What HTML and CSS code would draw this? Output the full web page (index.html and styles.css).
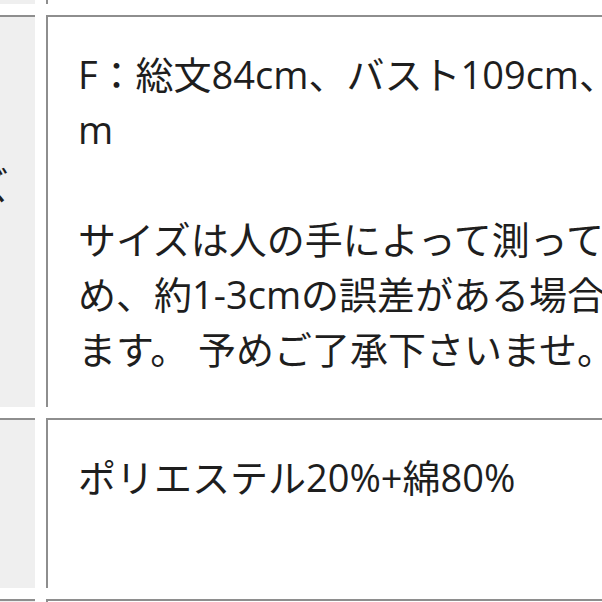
FILE: index.html
```html
<!DOCTYPE html>
<html lang="ja">
<head>
<meta charset="utf-8">
<link rel="stylesheet" href="styles.css">
</head>
<body>
<div class="spec">
  <div class="th th-prev"></div>
  <div class="td td-prev"></div>

  <div class="th th-size">サイズ</div>
  <div class="td td-size">F：総文84cm、バスト109cm、<br>m<br><br>サイズは人の手によって測っているた<br>め、約1-3cmの誤差がある場合がござい<br>ます。 予めご了承下さいませ。</div>

  <div class="th">素材</div>
  <div class="td td-material">ポリエステル20%+綿80%<br><br></div>

  <div class="th th-next">生産国</div>
  <div class="td td-next">中国</div>
</div>
</body>
</html>
```

FILE: styles.css
```css
html, body {
  margin: 0;
  padding: 0;
  background: #ffffff;
}

body {
  width: 602px;
  height: 602px;
  overflow: hidden;
  font-family: "Open Sans", "Noto Sans CJK JP", sans-serif;
  color: #1e1e1e;
}

.spec {
  display: grid;
  grid-template-columns: 165px 700px;
  column-gap: 11px;
  row-gap: 11px;
  margin-left: -130px;
  margin-top: -56px;
}

.th,
.td {
  border-top: 2px solid #8e8e8e;
  border-left: 2px solid #8e8e8e;
  font-size: 38px;
  line-height: 55px;
  white-space: nowrap;
  overflow: hidden;
}

.th {
  background: #efefef;
  padding: 30px 0 30px 30px;
}

.td {
  background: #ffffff;
  padding: 30px 0 30px 30px;
}

.th-prev,
.td-prev {
  height: 60px;
  box-sizing: border-box;
  padding: 0;
}

.th-size {
  padding-top: 141px;
  padding-left: 24px;
}

.td-material {
  padding-bottom: 28px;
}
```
